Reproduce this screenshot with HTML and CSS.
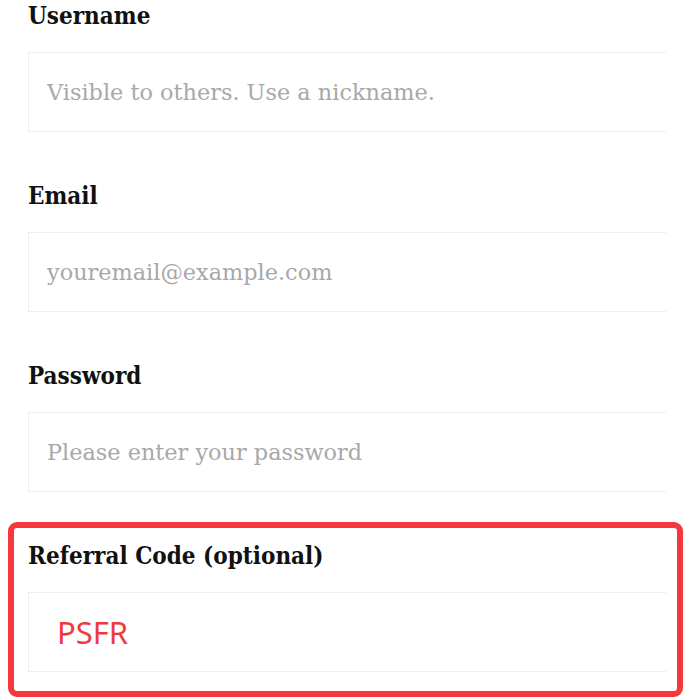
FILE: index.html
```html
<!DOCTYPE html>
<html lang="en">
<head>
<meta charset="utf-8">
<title>Sign up</title>
<link rel="stylesheet" href="styles.css">
</head>
<body>
<form class="form">
  <div class="field">
    <label class="label" for="username">Username</label>
    <input class="input" id="username" type="text" placeholder="Visible to others. Use a nickname.">
  </div>
  <div class="field">
    <label class="label" for="email">Email</label>
    <input class="input" id="email" type="email" placeholder="youremail@example.com">
  </div>
  <div class="field">
    <label class="label" for="password">Password</label>
    <input class="input" id="password" type="password" placeholder="Please enter your password">
  </div>
  <div class="field field-highlight">
    <label class="label" for="referral">Referral Code (optional)</label>
    <input class="input input-code" id="referral" type="text" value="PSFR">
  </div>
</form>
</body>
</html>
```
FILE: styles.css
```css
html, body {
  margin: 0;
  padding: 0;
  background: #ffffff;
}

body {
  overflow: hidden;
}

.form {
  display: flex;
  flex-direction: column;
  gap: 5px;
  margin: -18px 0 0 0;
  padding: 0 17px 0 8px;
}

.field {
  display: flex;
  flex-direction: column;
  border: 6px solid transparent;
  border-radius: 9px;
  padding: 14px 11px 19px 14px;
}

.field-highlight {
  border-color: #f5383c;
}

.label {
  display: block;
  font-family: "DejaVu Serif Condensed", "DejaVu Serif", serif;
  font-stretch: condensed;
  font-weight: bold;
  font-size: 24px;
  line-height: 28px;
  color: #111111;
  margin-bottom: 22px;
}

.input {
  box-sizing: border-box;
  display: block;
  width: 100%;
  height: 80px;
  margin: 0;
  border: 1px solid #efefef;
  border-right: none;
  border-radius: 0;
  padding: 0 0 0 18px;
  background: #ffffff;
  font-family: "DejaVu Serif", serif;
  font-size: 22.4px;
  color: #333333;
  outline: none;
}

.input::placeholder {
  color: #a8a8a8;
  opacity: 1;
}

.input-code {
  padding-left: 28px;
  font-family: "Noto Sans", sans-serif;
  font-size: 31px;
  color: #ee3a3d;
}
```
